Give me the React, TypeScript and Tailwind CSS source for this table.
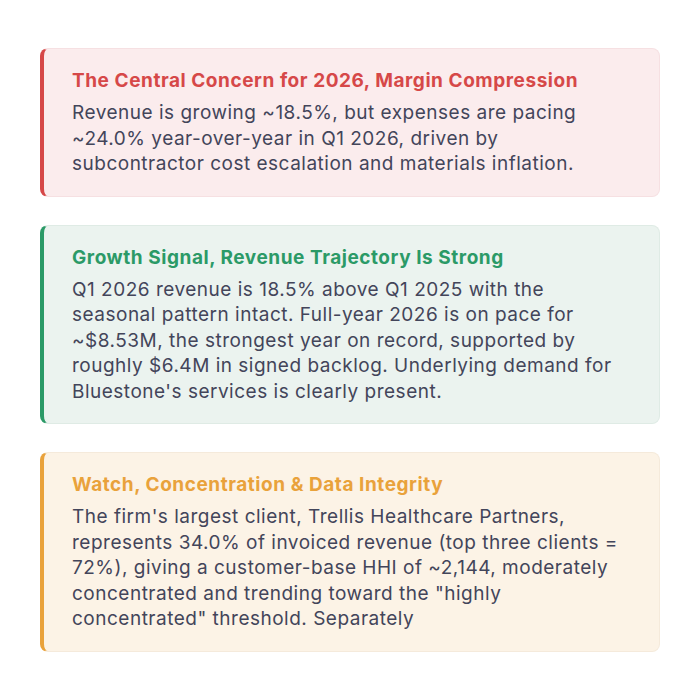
const cards = [
  {
    title: 'The Central Concern for 2026, Margin Compression',
    body: 'Revenue is growing ~18.5%, but expenses are pacing ~24.0% year-over-year in Q1 2026, driven by subcontractor cost escalation and materials inflation.',
    wrap: 'bg-[#fbeced] border-[#f6e0e2] border-l-[#d64848]',
    head: 'text-[#d64848]',
  },
  {
    title: 'Growth Signal, Revenue Trajectory Is Strong',
    body: "Q1 2026 revenue is 18.5% above Q1 2025 with the seasonal pattern intact. Full-year 2026 is on pace for ~$8.53M, the strongest year on record, supported by roughly $6.4M in signed backlog. Underlying demand for Bluestone's services is clearly present.",
    wrap: 'bg-[#ebf3ef] border-[#dfebe5] border-l-[#2b9a67]',
    head: 'text-[#2b9a67]',
  },
  {
    title: 'Watch, Concentration & Data Integrity',
    body: 'The firm\'s largest client, Trellis Healthcare Partners, represents 34.0% of invoiced revenue (top three clients = 72%), giving a customer-base HHI of ~2,144, moderately concentrated and trending toward the "highly concentrated" threshold. Separately',
    wrap: 'bg-[#fcf3e6] border-[#f5eadb] border-l-[#e9a23b]',
    head: 'text-[#e9a23b]',
  },
];

export default function App() {
  return (
    <div className="min-h-screen bg-white px-10 pt-12 font-['Inter',sans-serif]">
      <div className="flex flex-col gap-7">
        {cards.map((c) => (
          <div key={c.title} className={`rounded-lg border border-l-4 pl-7 pr-7 pt-[19px] pb-[19px] ${c.wrap}`}>
            <h2 className={`text-[19px] font-bold leading-[26px] tracking-[0.55px] ${c.head}`}>{c.title}</h2>
            <p className="mt-[6px] text-[19px] leading-[25.5px] tracking-[0.5px] text-[#43455a]">{c.body}</p>
          </div>
        ))}
      </div>
    </div>
  );
}
